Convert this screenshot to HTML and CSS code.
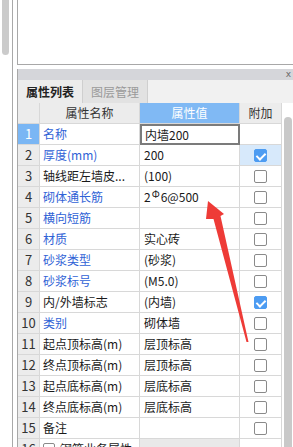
FILE: index.html
```html
<!DOCTYPE html>
<html lang="zh-CN">
<head>
    <meta charset="UTF-8">
    <title>属性列表</title>
    <link rel="stylesheet" href="styles.css">
</head>
<body>
    <div class="gutter">
        <div class="gutter-thumb"></div>
    </div>
    <div class="main">
        <div class="canvas"></div>
        <div class="panel">
            <div class="titlebar"><span class="close">x</span></div>
            <div class="tabs">
                <div class="tab active">属性列表</div>
                <div class="tab">图层管理</div>
            </div>
            <div class="grid-wrap">
                <div class="grid">
                    <div class="cell head"></div>
                    <div class="cell head center">属性名称</div>
                    <div class="cell head center hl">属性值</div>
                    <div class="cell head center">附加</div>

                    <div class="cell num sel">1</div>
                    <div class="cell name blue">名称</div>
                    <div class="cell value editing">内墙200</div>
                    <div class="cell extra"></div>

                    <div class="cell num">2</div>
                    <div class="cell name blue">厚度(mm)</div>
                    <div class="cell value">200</div>
                    <div class="cell extra hover"><span class="check on"></span></div>

                    <div class="cell num">3</div>
                    <div class="cell name">轴线距左墙皮...</div>
                    <div class="cell value">(100)</div>
                    <div class="cell extra"><span class="check"></span></div>

                    <div class="cell num">4</div>
                    <div class="cell name blue">砌体通长筋</div>
                    <div class="cell value">2<span class="steel">Φ</span>6@500</div>
                    <div class="cell extra"><span class="check"></span></div>

                    <div class="cell num">5</div>
                    <div class="cell name blue">横向短筋</div>
                    <div class="cell value"></div>
                    <div class="cell extra"><span class="check"></span></div>

                    <div class="cell num">6</div>
                    <div class="cell name blue">材质</div>
                    <div class="cell value">实心砖</div>
                    <div class="cell extra"><span class="check"></span></div>

                    <div class="cell num">7</div>
                    <div class="cell name blue">砂浆类型</div>
                    <div class="cell value">(砂浆)</div>
                    <div class="cell extra"><span class="check"></span></div>

                    <div class="cell num">8</div>
                    <div class="cell name blue">砂浆标号</div>
                    <div class="cell value">(M5.0)</div>
                    <div class="cell extra"><span class="check"></span></div>

                    <div class="cell num">9</div>
                    <div class="cell name">内/外墙标志</div>
                    <div class="cell value">(内墙)</div>
                    <div class="cell extra"><span class="check on"></span></div>

                    <div class="cell num">10</div>
                    <div class="cell name blue">类别</div>
                    <div class="cell value">砌体墙</div>
                    <div class="cell extra"><span class="check"></span></div>

                    <div class="cell num">11</div>
                    <div class="cell name">起点顶标高(m)</div>
                    <div class="cell value">层顶标高</div>
                    <div class="cell extra"><span class="check"></span></div>

                    <div class="cell num">12</div>
                    <div class="cell name">终点顶标高(m)</div>
                    <div class="cell value">层顶标高</div>
                    <div class="cell extra"><span class="check"></span></div>

                    <div class="cell num">13</div>
                    <div class="cell name">起点底标高(m)</div>
                    <div class="cell value">层底标高</div>
                    <div class="cell extra"><span class="check"></span></div>

                    <div class="cell num">14</div>
                    <div class="cell name">终点底标高(m)</div>
                    <div class="cell value">层底标高</div>
                    <div class="cell extra"><span class="check"></span></div>

                    <div class="cell num">15</div>
                    <div class="cell name">备注</div>
                    <div class="cell value"></div>
                    <div class="cell extra"><span class="check"></span></div>

                    <div class="cell num">16</div>
                    <div class="cell name"><span class="expander"></span>钢筋业务属性</div>
                    <div class="cell value group"></div>
                    <div class="cell extra"></div>
                </div>
                <div class="scroll">
                    <div class="scroll-thumb"></div>
                </div>
            </div>
        </div>
    </div>

    <!-- red annotation arrow drawn over the table -->
    <svg class="arrow" width="293" height="447" viewBox="0 0 293 447">
        <polygon points="208,201 224,214 220.5,216 248.5,342 246.5,342 213.5,219 206,219" fill="#ee3b37"/>
    </svg>
</body>
</html>
```

FILE: styles.css
```css
body {
    margin: 0;
    width: 293px;
    height: 447px;
    overflow: hidden;
    display: flex;
    background-color: white;
    font-family: "Noto Sans CJK SC", "Liberation Sans", sans-serif;
    font-size: 12px;
    color: #1a1a1a;
}

.gutter {
    width: 13px;
    flex-shrink: 0;
    border-right: 1px solid #a9a9a9;
    margin-right: 4px;
    padding-left: 2px;
    box-sizing: border-box;
}

.gutter-thumb {
    width: 7px;
    height: 55px;
    background-color: #cbcbcb;
    border-radius: 0 0 4px 4px;
}

.main {
    flex: 1;
    display: flex;
    flex-direction: column;
}

.canvas {
    height: 65px;
    flex-shrink: 0;
    border-left: 1px solid #a8a8a8;
    border-bottom: 1px solid #a8a8a8;
    box-sizing: border-box;
}

.panel {
    margin-top: 4px;
    border-left: 1px solid #a8a8a8;
    flex: 1;
    display: flex;
    flex-direction: column;
}

.titlebar {
    height: 11px;
    background-color: #d5d6da;
    display: flex;
    justify-content: flex-end;
    align-items: center;
    padding-right: 2px;
}

.close {
    font-family: "DejaVu Sans", sans-serif;
    font-size: 9px;
    line-height: 9px;
    color: #6a6a6a;
}

.tabs {
    height: 23px;
    background-color: #f1f1f1;
    display: flex;
}

.tab {
    width: 64px;
    display: flex;
    align-items: center;
    justify-content: center;
    font-size: 12px;
    color: #9a9a9a;
    background-color: #e2e2e2;
    border-right: 1px solid #cfcfcf;
}

.tab.active {
    color: #222;
    font-weight: bold;
    background-color: #ececec;
}

.grid-wrap {
    display: flex;
}

.grid {
    display: grid;
    grid-template-columns: 22px 100px 100px 42px;
    grid-auto-rows: 21px;
}

.cell {
    box-sizing: border-box;
    border-right: 1px solid #d8d8d8;
    border-bottom: 1px solid #d8d8d8;
    display: flex;
    align-items: center;
    white-space: nowrap;
    overflow: hidden;
    line-height: 20px;
}

.head {
    background-color: #ececec;
    color: #333;
}

.center {
    justify-content: center;
}

.head.hl {
    background-color: #80b9f4;
    color: white;
}

.num {
    justify-content: center;
    background-color: #ececec;
    color: #333;
    font-size: 13px;
}

.num.sel {
    background-color: #7ab6f4;
    color: white;
}

.name {
    padding-left: 3px;
}

.name.blue {
    color: #2f62d6;
}

.value {
    padding-left: 4px;
}

.value.editing {
    border: 2px solid #7b7b7b;
    padding-left: 3px;
}

.value.group {
    background-color: #e9e9e9;
}

.steel {
    font-size: 10px;
    position: relative;
    top: -3px;
    margin: 0 1px;
}

.extra {
    justify-content: center;
}

.extra.hover {
    background-color: #d7e9fb;
}

.check {
    width: 13px;
    height: 13px;
    box-sizing: border-box;
    border: 1px solid #8a8a8a;
    border-radius: 2px;
    background-color: white;
    position: relative;
}

.check.on {
    background-color: #4d9cf2;
    border-color: #4d9cf2;
}

.check.on::after {
    content: "";
    position: absolute;
    left: 3px;
    top: 1px;
    width: 4px;
    height: 7px;
    border-right: 2px solid white;
    border-bottom: 2px solid white;
    transform: rotate(45deg);
}

.expander {
    width: 12px;
    height: 12px;
    box-sizing: border-box;
    border: 1px solid #8a8a8a;
    border-radius: 2px;
    margin-right: 5px;
    flex-shrink: 0;
}

.scroll {
    width: 10px;
    padding-left: 2px;
    box-sizing: border-box;
}

.scroll-thumb {
    margin-top: 14px;
    height: 400px;
    background-color: #c9c9c9;
    border-radius: 4px 4px 0 0;
}

.arrow {
    position: absolute;
    left: 0;
    top: 0;
    pointer-events: none;
}
```
